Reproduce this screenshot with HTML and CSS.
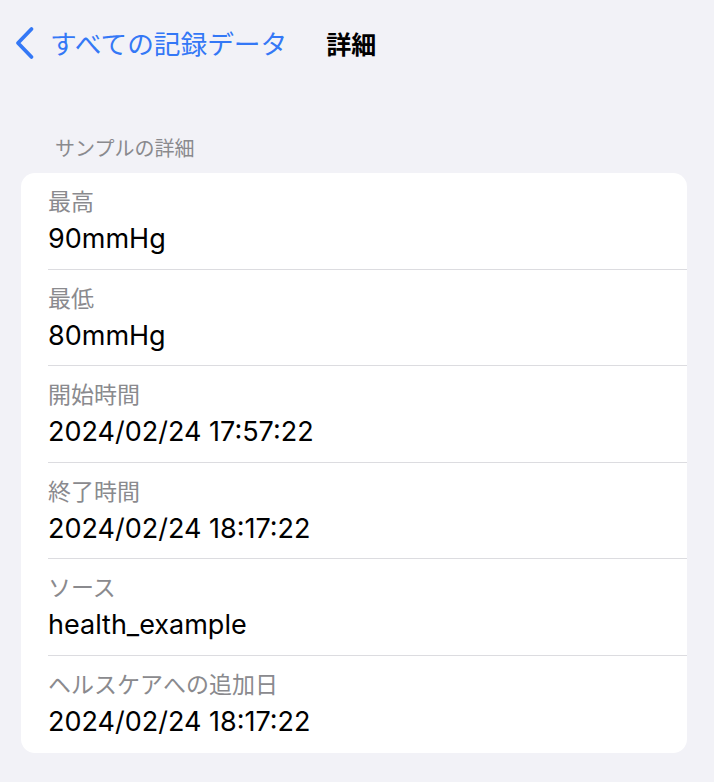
FILE: index.html
```html
<!DOCTYPE html>
<html lang="ja">
<head>
<meta charset="utf-8">
<link rel="stylesheet" href="styles.css">
</head>
<body>
<header class="nav">
  <a class="back">
    <svg class="chev" width="22" height="34" viewBox="0 0 22 34"><path d="M18.5 3 L5 17 L18.5 31" fill="none" stroke="#3478f6" stroke-width="3.8" stroke-linecap="round" stroke-linejoin="round"/></svg>
    <span class="back-text">すべての記録データ</span>
  </a>
  <h1 class="title">詳細</h1>
</header>
<main class="content">
  <div class="section-title">サンプルの詳細</div>
  <div class="card">
    <div class="row"><div class="label">最高</div><div class="value">90mmHg</div></div>
    <div class="row"><div class="label">最低</div><div class="value">80mmHg</div></div>
    <div class="row"><div class="label">開始時間</div><div class="value">2024/02/24 17:57:22</div></div>
    <div class="row"><div class="label">終了時間</div><div class="value">2024/02/24 18:17:22</div></div>
    <div class="row"><div class="label">ソース</div><div class="value">health_example</div></div>
    <div class="row"><div class="label">ヘルスケアへの追加日</div><div class="value">2024/02/24 18:17:22</div></div>
  </div>
</main>
</body>
</html>
```
FILE: styles.css
```css
html, body {
  margin: 0;
  padding: 0;
  background: #f2f2f7;
  font-family: "Inter", "Noto Sans CJK JP", sans-serif;
  color: #000;
}
.nav {
  display: flex;
  align-items: center;
  height: 86px;
  padding-left: 13px;
  box-sizing: border-box;
}
.back {
  display: flex;
  align-items: center;
  gap: 15px;
  color: #3478f6;
}
.chev { display: block; margin-top: -1px; }
.back-text {
  font-family: "Noto Sans CJK JP", sans-serif;
  font-size: 26.7px;
  line-height: 1;
}
.title {
  margin: 0 0 0 39px;
  font-family: "Noto Sans CJK JP", sans-serif;
  font-size: 25px;
  font-weight: 700;
  line-height: 1;
}
.content {
  padding: 48px 27px 0 21px;
}
.section-title {
  color: #8a8a8e;
  font-family: "Noto Sans CJK JP", sans-serif;
  font-size: 20px;
  line-height: 28px;
  padding-left: 34px;
  margin-bottom: 11px;
}
.card {
  background: #fff;
  border-radius: 14px;
  display: flex;
  flex-direction: column;
  overflow: hidden;
}
.row {
  height: 96.6px;
  box-sizing: border-box;
  margin-left: 27px;
  padding-top: 12px;
  border-bottom: 1px solid #dcdce0;
}
.row:last-child { border-bottom: none; }
.label {
  color: #8a8a8e;
  font-family: "Noto Sans CJK JP", sans-serif;
  font-size: 23px;
  line-height: 30px;
}
.value {
  font-size: 27px;
  line-height: 32px;
  margin-top: 8px;
}
```
